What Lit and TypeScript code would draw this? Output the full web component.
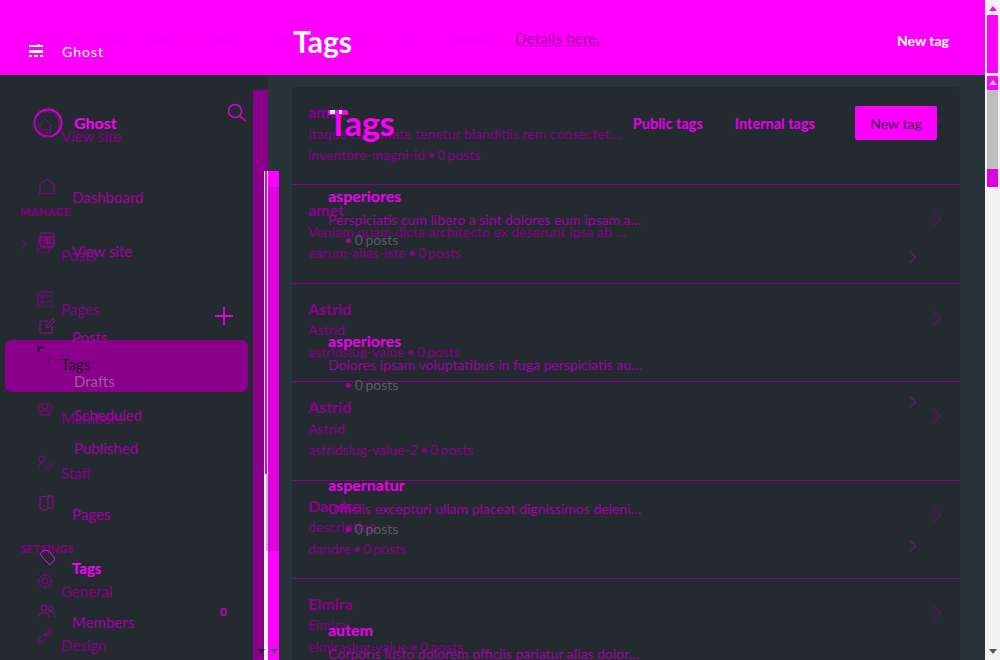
import { LitElement, css, html, svg } from 'lit';
import { customElement } from 'lit/decorators.js';

const ICONS: Record<string, unknown> = {
  house: svg`<path d="M1 8 8 1l7 7M3 7v9h10V7M6 16v-5h4v5"/>`,
  home: svg`<path d="M1 6.5 8 1l7 5.5V16H1z"/>`,
  layers: svg`<path d="M1 4h11v12H1zM4 4V1h11v11h-3M4 8h5M4 11h5"/>`,
  panel: svg`<rect x="1" y="1" width="14" height="14" rx="2"/><path d="M1 5h14M4 8h8M4 11h8M8 5v9"/>`,
  list: svg`<rect x="1" y="1" width="15" height="15" rx="1"/><path d="M4 4h3v3H4zM4 10h3v3H4zM9 5h5M9 11h5"/>`,
  edit: svg`<path d="M9 3H2a1 1 0 0 0-1 1v11h12V8M7 10l1-3 6-6 2 2-6 6z"/>`,
  tagDark: svg`<path d="M1 1h5v1H2v4H1zM9 13l4-4M11 15l4-4"/>`,
  people: svg`<circle cx="8" cy="6" r="3"/><path d="M3 15c0-6 10-6 10 0zM3 9a2.500 2.500 0 1 1 2-5M13 9a2.500 2.500 0 1 0-2-5M1 13c0-2 1-3 2-4M15 13c0-2-1-3-2-4"/>`,
  staff: svg`<circle cx="5" cy="4" r="3"/><path d="M1 14c0-3 2-6 5-6M8 14l6-6 2 2-6 6-3 1z"/>`,
  book: svg`<path d="M1 2 9 1v13l-4 1-4-2zM9 1h4a1 1 0 0 1 1 1v11h-5"/>`,
  tag: svg`<path d="M1 5 5 1l5 1 6 8-5 6-7-7z"/>`,
  gear: svg`<circle cx="8" cy="8" r="6"/><circle cx="8" cy="8" r="3"/><path d="M8 0v2M8 14v2M0 8h2M14 8h2M2 2l2 2M12 12l2 2M14 2l-2 2M4 12l-2 2"/>`,
  members: svg`<circle cx="5" cy="5" r="3"/><circle cx="12" cy="5.500" r="2.500"/><path d="M0 14c0-6 10-6 10 0M10 9c3-1 6 1 6 5"/>`,
  brush: svg`<path d="M10 6l3-5c1-1 3 1 2 2l-5 5-3-1zM7 7l3 2-5 6H1l1-3z"/>`,
};

const icon = (name: string, cls = '') =>
  html`<svg class="icon ${cls}" viewBox="0 0 16 16">${ICONS[name]}</svg>`;

const chevron = (cls: string) =>
  html`<svg class=${cls} viewBox="0 0 9 16"><path d="M.5.5 8.500 8 .5 15.500"/></svg>`;

const NAV_MANAGE = [
  ['layers', 'Posts'],
  ['list', 'Pages'],
  ['tagDark', 'Tags'],
  ['people', 'Members'],
  ['staff', 'Staff'],
];

const ROWS_BACK = [
  ['amet', 'Itaque cupiditate tenetur blanditiis rem consectet…', 'inventore-magni-id • 0 posts'],
  ['amet', 'Veniam quam dicta architecto ex deserunt ipsa ab …', 'earum-alias-iste • 0 posts'],
  ['Astrid', 'Astrid', 'astridslug-value • 0 posts'],
  ['Astrid', 'Astrid', 'astridslug-value-2 • 0 posts'],
  ['Dandre', 'description', 'dandre • 0 posts'],
  ['Elmira', 'Elmira', 'elmiraslug-value • 0 posts'],
];

const ROWS_FRONT = [
  ['asperiores', 'Perspiciatis cum libero a sint dolores eum ipsam a…'],
  ['asperiores', 'Dolores ipsam voluptatibus in fuga perspiciatis au…'],
  ['aspernatur', 'Officiis excepturi ullam placeat dignissimos deleni…'],
  ['autem', 'Corporis iusto dolorem officiis pariatur alias dolor…'],
];

@customElement('app-root')
export class AppRoot extends LitElement {
  static styles = css`
    :host {
      display: block;
      width: 1000px;
      height: 660px;
      overflow: hidden;
      font-family: Lato, 'Noto Sans', sans-serif;
      font-size: 14px;
      background: #232a30;
      --dim: #8a008a;
      --mid: #a800a8;
      --hot: #ff00ff;
    }
    .page {
      display: grid;
      grid-template-columns: 985px 15px;
      height: 660px;
    }
    .left {
      display: flex;
      flex-direction: column;
      min-width: 0;
    }
    .stack {
      display: grid;
    }
    .stack > * {
      grid-area: 1 / 1;
      min-width: 0;
    }

    /* top banner, two layers */
    .banner {
      height: 75px;
      background: var(--hot);
    }
    .alert {
      display: flex;
      align-items: center;
      gap: 4px;
      padding-left: 16px;
      font-size: 15.500px;
      color: #f200f2;
      white-space: nowrap;
    }
    .alert span {
      letter-spacing: .35px;
    }
    .alert a {
      color: var(--mid);
      text-decoration: underline;
    }
    .bar {
      display: flex;
      align-items: flex-start;
      color: #fff;
      padding-left: 29px;
    }
    .burger {
      width: 14px;
      height: 14px;
      margin-top: 44px;
      fill: #fff;
    }
    .bar .brand {
      width: 231px;
      margin: 42px 0 0 19px;
      letter-spacing: 1px;
      line-height: 20px;
    }
    .bar h1 {
      margin: 24px 0 0;
      font-size: 30px;
      line-height: 34px;
      font-weight: 700;
    }
    .bar .new {
      margin: 31px 36px 0 auto;
      font-weight: 700;
      font-size: 14px;
      line-height: 20px;
    }

    .body {
      flex: 1;
      display: grid;
      grid-template-columns: 253px 26px 1fr;
      min-height: 0;
    }

    /* sidebar, two layers */
    .side {
      height: 585px;
      overflow: visible;
    }
    .nav-back {
      display: flex;
      flex-direction: column;
      gap: 2.4px;
      padding-top: 37px;
      color: var(--dim);
    }
    .nav-back .row {
      display: flex;
      align-items: flex-start;
      height: 52px;
      margin: 0 5px;
      padding-left: 17px;
      border-radius: 7px;
      width: 243px;
      box-sizing: border-box;
    }
    .nav-back .row.on {
      background: #8b008b;
      color: #1b1f27;
    }
    .slot {
      width: 15px;
      flex: none;
    }
    .slot svg {
      width: 5px;
      height: 9px;
      margin-top: 9px;
      fill: none;
      stroke: currentColor;
    }
    .nav-back .icon {
      margin-top: 6px;
    }
    .nav-back .label {
      margin: 14px 0 0 8px;
      line-height: 20px;
      font-size: 15px;
    }
    .section {
      height: 14px;
      line-height: 13px;
      font-size: 11px;
      font-weight: 900;
      letter-spacing: .3px;
      padding-left: 20px;
      color: #82007f;
    }
    .section.manage {
      margin: 38.600px 0 9.600px;
    }
    .section.settings {
      margin: 38.600px 0 8.600px;
    }
    .icon {
      width: 16px;
      height: 16px;
      flex: none;
      fill: none;
      stroke: currentColor;
      stroke-width: 1;
    }

    .nav-front {
      display: flex;
      flex-direction: column;
      padding: 33px 0 0 39px;
      color: var(--mid);
    }
    .logo {
      display: flex;
      align-items: flex-start;
      height: 31px;
      color: var(--hot);
    }
    .logo .mark {
      width: 30px;
      height: 30px;
      margin-left: -6px;
      fill: none;
      stroke: #d400d4;
      stroke-width: 2;
    }
    .logo .mark .rough {
      stroke-width: 1;
      stroke: #9a009a;
    }
    .logo b {
      margin: 5px 0 0 11px;
      font-size: 16px;
      line-height: 20px;
    }
    .search {
      width: 19px;
      height: 19px;
      margin: -5px 7px 0 auto;
      fill: none;
      stroke: #e000e0;
      stroke-width: 1.500;
    }
    .nav-front .row {
      display: flex;
      align-items: flex-start;
      height: 54px;
      width: 194px;
    }
    .nav-front .label {
      margin: 15px 0 0 17px;
      font-size: 15px;
      line-height: 20px;
    }
    .nav-front .icon {
      margin-top: 6px;
    }
    .nav-front .row.gap-logo {
      margin-top: 33px;
    }
    .nav-front .row.gap-posts {
      margin-top: 32px;
      height: 53px;
    }
    .nav-front .row.gap-pages {
      margin-top: 23.500px;
    }
    .plus {
      width: 18px;
      height: 18px;
      margin: -5px 0 0 auto;
      fill: none;
      stroke: #e000e0;
      stroke-width: 2;
    }
    .sub {
      height: 33.500px;
      line-height: 33.500px;
      padding-left: 35px;
      font-size: 15px;
    }
    .sub.grey {
      color: #9a5c9a;
    }
    .nav-front .row.hot {
      color: var(--hot);
    }
    .nav-front .row.hot .label {
      font-weight: 700;
    }
    .count {
      margin: 6px 6px 0 auto;
      font-size: 12px;
      font-weight: 700;
      line-height: 18px;
      color: #d000d0;
    }

    /* the two scrollbars beside the sidebar */
    .rail {
      display: grid;
      grid-template-columns: 11px 4px 11px;
      height: 585px;
      background: linear-gradient(90deg, #232a30 15px, #29343a 15px);
    }
    .rail .back {
      grid-column: 1 / 3;
      grid-row: 1;
      margin-top: 15px;
      background: #8b008b;
    }
    .rail .strip {
      grid-column: 2;
      grid-row: 1;
      margin-top: 96px;
      background: #f1f1f1;
    }
    .rail .strip i {
      display: block;
      height: 303px;
      margin: 0 1px;
      background: #e000e0;
    }
    .rail .strip u {
      display: block;
      height: 77px;
      margin-left: 2px;
      background: #bdbdbd;
    }
    .rail .thumb {
      grid-column: 3;
      grid-row: 1;
      margin-top: 96px;
      display: flex;
      flex-direction: column;
      background: var(--hot);
    }
    .rail .thumb i {
      display: block;
      height: 16px;
    }
    .rail .thumb u {
      display: block;
      height: 364px;
      background: #e000e0;
    }
    .rail .arrow {
      width: 0;
      height: 0;
      border: 4px solid transparent;
      border-top: 5px solid #555;
      border-bottom: 0;
      justify-self: center;
      align-self: end;
      margin-bottom: 6px;
    }
    .rail .a1 {
      grid-column: 1 / 3;
      grid-row: 1;
      border-top-color: #222;
    }
    .rail .a2 {
      grid-column: 3;
      grid-row: 1;
    }

    /* content */
    .content {
      background: #29343a;
      padding: 12px 25px 0 13px;
      height: 585px;
      box-sizing: border-box;
      overflow: hidden;
    }
    .panel {
      background: #232a30;
      border-radius: 5px 5px 0 0;
      height: 573px;
      overflow: hidden;
    }
    .list-back {
      color: var(--dim);
    }
    .item {
      display: flex;
      align-items: flex-start;
      box-sizing: border-box;
      height: 98.400px;
      padding: 14px 19px 0 16px;
      border-bottom: 1px solid #8b008b;
    }
    .item .text {
      flex: 1;
      min-width: 0;
    }
    .item .title {
      font-size: 16px;
      font-weight: 700;
      line-height: 21.500px;
      color: #8f008f;
    }
    .item .line {
      line-height: 21.500px;
      white-space: nowrap;
    }
    .item .slug {
      word-spacing: -1.500px;
    }
    .chev-back {
      width: 9px;
      height: 16px;
      margin-top: 12px;
      flex: none;
      fill: none;
      stroke: #8a008a;
    }

    .list-front {
      padding: 19px 44px 0 36px;
    }
    .fragment {
      align-self: start;
      justify-self: start;
      width: 19px;
      height: 4px;
      margin: 23px 0 0 36px;
      background: linear-gradient(90deg, var(--hot) 2px, #fff 2px, #fff 7px, var(--hot) 7px, var(--hot) 11px, #fff 11px, #fff 14px, var(--hot) 14px);
    }
    .head {
      display: flex;
      align-items: center;
      height: 34px;
      margin: 0 -21px 46px 0;
      color: var(--hot);
    }
    .head h2 {
      margin: 0;
      font-size: 34px;
      font-weight: 700;
      line-height: 34px;
    }
    .head .tab {
      font-size: 14.500px;
      font-weight: 700;
      color: #e800e8;
    }
    .head .tab.first {
      margin-left: auto;
    }
    .head .tab + .tab {
      margin-left: 32px;
    }
    .head button {
      margin-left: 40px;
      width: 82px;
      height: 34px;
      border: 0;
      border-radius: 2px;
      background: var(--hot);
      color: #3d1d4a;
      font: 14px Lato, 'Noto Sans', sans-serif;
    }
    .entry {
      display: flex;
      align-items: flex-start;
      height: 144.500px;
    }
    .entry .text {
      flex: 1;
      min-width: 0;
    }
    .entry .title {
      font-size: 16px;
      font-weight: 700;
      line-height: 20px;
      color: #f000f0;
    }
    .entry .line {
      margin-top: 3px;
      line-height: 21px;
      color: var(--mid);
      white-space: nowrap;
    }
    .entry .meta {
      padding-left: 16px;
      line-height: 20px;
      word-spacing: -1px;
      color: #5a5f66;
    }
    .entry .meta b {
      font-weight: 400;
      color: var(--mid);
    }
    .chev-front {
      width: 7px;
      height: 14px;
      margin-top: 64px;
      flex: none;
      fill: none;
      stroke: #c000c0;
    }

    /* window scrollbar */
    .vbar {
      background: #f1f1f1;
      display: flex;
      flex-direction: column;
      align-items: center;
      padding-top: 6px;
    }
    .tri {
      width: 0;
      height: 0;
      border: 4px solid transparent;
      border-top: 0;
      border-bottom: 5px solid var(--hot);
      flex: none;
    }
    .vbar .t1 {
      width: 11px;
      height: 58px;
      margin-top: 4px;
      background: var(--hot);
    }
    .vbar .t2 {
      display: flex;
      align-items: flex-start;
      justify-content: center;
      width: 11px;
      height: 14px;
      margin-top: 3px;
      padding-top: 4px;
      box-sizing: border-box;
      background: var(--hot);
    }
    .vbar .t2 .tri {
      border-bottom-color: #bdbdbd;
    }
    .vbar .t3 {
      width: 11px;
      height: 79px;
      background: #bdbdbd;
    }
    .vbar .t4 {
      width: 11px;
      height: 18px;
      background: #e000e0;
    }
    .vbar .down {
      margin-top: auto;
      margin-bottom: 6px;
      border: 4px solid transparent;
      border-top: 5px solid #555;
      border-bottom: 0;
    }
  `;

  private renderBanner() {
    return html`
      <div class="banner stack">
        <div class="alert">
          <span>Critical security update available — please update as soon as possible.</span>
          <a>Details here.</a>
        </div>
        <div class="bar">
          <svg class="burger" viewBox="0 0 14 14">
            <path d="M9 0h2v1H9zM0 1h14v2H0zM0 6h14v3H0zM0 11h3v2H0zM5 11h4v2H5zM11 11h3v2h-3z"/>
          </svg>
          <span class="brand">Ghost</span>
          <h1>Tags</h1>
          <span class="new">New tag</span>
        </div>
      </div>
    `;
  }

  private renderNavBack() {
    const row = ([ic, label]: string[], extra = '') => html`
      <div class="row ${label === 'Tags' ? 'on' : ''}">
        <span class="slot">${extra}</span>
        ${icon(ic)}
        <span class="label">${label}</span>
      </div>
    `;
    return html`
      <div class="nav-back">
        ${row(['house', 'View site'])}
        <div class="section manage">MANAGE</div>
        ${NAV_MANAGE.map((r) =>
          r[1] === 'Posts'
            ? html`<div class="row">
                <span class="slot"><svg viewBox="0 0 5 9"><path d="M.5.500 4.500 4.500 .5 8.500"/></svg></span>
                ${icon(r[0])}<span class="label">${r[1]}</span>
              </div>`
            : row(r),
        )}
        <div class="section settings">SETTINGS</div>
        ${row(['gear', 'General'])}
        ${row(['brush', 'Design'])}
      </div>
    `;
  }

  private renderNavFront() {
    return html`
      <div class="nav-front">
        <div class="logo">
          <svg class="mark" viewBox="0 0 30 30">
            <circle cx="15" cy="15" r="13.500"/>
            <circle class="rough" cx="14" cy="16" r="12.500"/>
          </svg>
          <b>Ghost</b>
          <svg class="search" viewBox="0 0 19 19"><circle cx="8" cy="8" r="6.500"/><path d="m13 13 5.500 5"/></svg>
        </div>
        <div class="row gap-logo">${icon('home')}<span class="label">Dashboard</span></div>
        <div class="row">${icon('panel')}<span class="label">View site</span></div>
        <div class="row gap-posts">
          ${icon('edit')}<span class="label">Posts</span>
          <svg class="plus" viewBox="0 0 18 18"><path d="M9 0v18M0 9h18"/></svg>
        </div>
        <div class="sub grey">Drafts</div>
        <div class="sub">Scheduled</div>
        <div class="sub">Published</div>
        <div class="row gap-pages">${icon('book')}<span class="label">Pages</span></div>
        <div class="row hot">${icon('tag')}<span class="label">Tags</span></div>
        <div class="row">
          ${icon('members')}<span class="label">Members</span><span class="count">0</span>
        </div>
      </div>
    `;
  }

  private renderRail() {
    return html`
      <div class="rail">
        <div class="back"></div>
        <div class="strip"><i></i><u></u></div>
        <div class="thumb"><i></i><u></u></div>
        <div class="arrow a1"></div>
        <div class="arrow a2"></div>
      </div>
    `;
  }

  private renderLists() {
    return html`
      <div class="panel stack">
        <div class="list-back">
          ${ROWS_BACK.map(
            ([t, d, m]) => html`
              <div class="item">
                <div class="text">
                  <div class="title">${t}</div>
                  <div class="line">${d}</div>
                  <div class="line slug">${m}</div>
                </div>
                ${chevron('chev-back')}
              </div>
            `,
          )}
        </div>
        <div class="list-front">
          <div class="head">
            <h2>Tags</h2>
            <span class="tab first">Public tags</span>
            <span class="tab">Internal tags</span>
            <button>New tag</button>
          </div>
          ${ROWS_FRONT.map(
            ([t, d]) => html`
              <div class="entry">
                <div class="text">
                  <div class="title">${t}</div>
                  <div class="line">${d}</div>
                  <div class="meta"><b>•</b> 0 posts</div>
                </div>
                ${chevron('chev-front')}
              </div>
            `,
          )}
        </div>
        <div class="fragment"></div>
      </div>
    `;
  }

  render() {
    return html`
      <div class="page">
        <div class="left">
          ${this.renderBanner()}
          <div class="body">
            <div class="side stack">${this.renderNavBack()}${this.renderNavFront()}</div>
            ${this.renderRail()}
            <div class="content">${this.renderLists()}</div>
          </div>
        </div>
        <div class="vbar">
          <div class="tri"></div>
          <div class="t1"></div>
          <div class="t2"><div class="tri"></div></div>
          <div class="t3"></div>
          <div class="t4"></div>
          <div class="tri down"></div>
        </div>
      </div>
    `;
  }
}
